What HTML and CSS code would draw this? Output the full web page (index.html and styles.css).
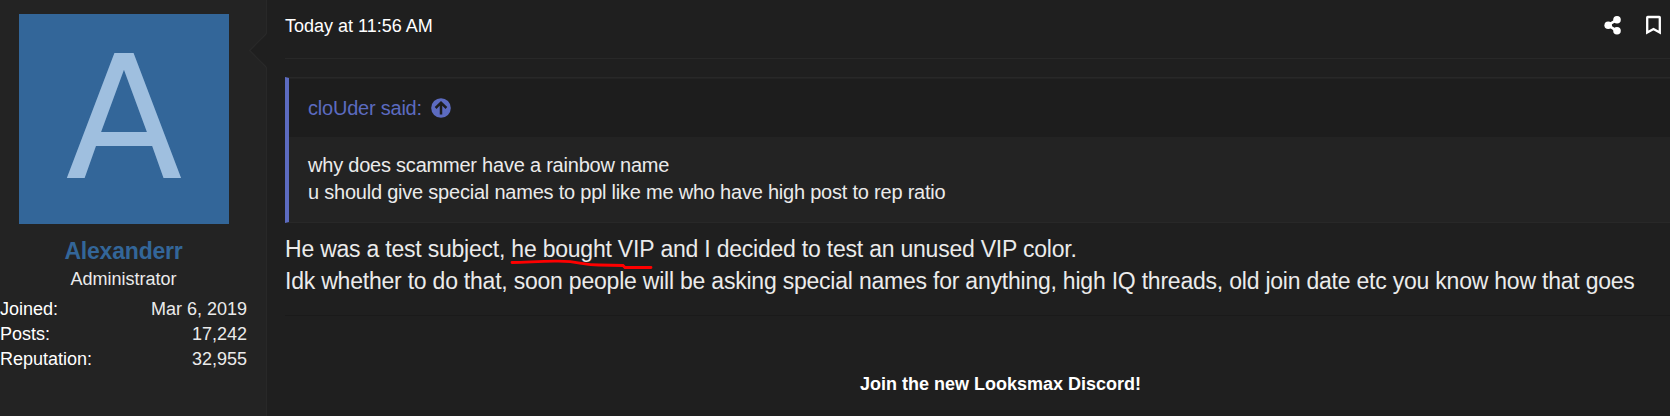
FILE: index.html
```html
<!DOCTYPE html>
<html lang="en">
<head>
  <meta charset="UTF-8" />
  <meta name="viewport" content="width=device-width, initial-scale=1.0" />
  <title>Thread</title>
  <link rel="stylesheet" href="styles.css">
</head>
<body>

  <article class="message">
    <aside class="message-user">
      <div class="avatar">A</div>
      <h4 class="username">Alexanderr</h4>
      <div class="user-title">Administrator</div>
      <dl class="user-stats">
        <div class="pair"><dt>Joined:</dt><dd>Mar 6, 2019</dd></div>
        <div class="pair"><dt>Posts:</dt><dd>17,242</dd></div>
        <div class="pair"><dt>Reputation:</dt><dd>32,955</dd></div>
      </dl>
      <svg class="arrow" width="18" height="36" viewBox="0 0 18 36">
        <path d="M17.5 1.5 L0.7 18.5 L17.5 35.5" fill="#1f1f1f" stroke="#292929" stroke-width="1.3" />
        <path d="M17.5 2.5 V34.5" stroke="#1f1f1f" />
      </svg>
    </aside>

    <div class="message-main">
      <header class="message-header">
        <time>Today at 11:56 AM</time>
        <div class="actions">
          <svg width="17" height="20" viewBox="0 0 17 20" fill="#fff">
            <path d="M4 10.2 L12.8 4.8 M4 10.2 L12.8 15.8" stroke="#fff" stroke-width="2.6" />
            <circle cx="4.2" cy="10.2" r="3.8" />
            <circle cx="13" cy="4.7" r="3.8" />
            <circle cx="13" cy="15.8" r="3.8" />
          </svg>
          <svg width="15" height="20" viewBox="0 0 15 20" fill="none" stroke="#fff" stroke-width="2.3">
            <path d="M1.2 17.6 V2.5 Q1.2 2 1.7 2 H13.3 Q13.8 2 13.8 2.5 V17.6 L7.5 14 Z" />
          </svg>
        </div>
      </header>

      <blockquote class="quote">
        <div class="quote-title">
          <span>cloUder said:</span>
          <svg width="20" height="20" viewBox="0 0 20 20">
            <circle cx="10" cy="10" r="9.8" fill="#5c6bc0" />
            <path d="M10 16.5 V5 M4.6 10 L10 4.7 L15.4 10" fill="none" stroke="#1d1d1d" stroke-width="2.5" />
          </svg>
        </div>
        <div class="quote-content">
          why does scammer have a rainbow name<br>
          u should give special names to ppl like me who have high post to rep ratio
        </div>
      </blockquote>

      <div class="message-body">
        He was a test subject, <span class="marked">he bought VIP<svg class="scribble" width="146" height="12" viewBox="0 0 146 12">
          <path d="M3 4.5 C18 4.5 30 3 48 3.2 C72 3 72 7 90 7 L114 7.5 L116 9.5 L142 9.5" />
        </svg></span> and I decided to test an unused VIP color.<br>
        Idk whether to do that, soon people will be asking special names for anything, high IQ threads, old join date etc you know how that goes
      </div>

      <footer class="signature">Join the new Looksmax Discord!</footer>
    </div>
  </article>

</body>
</html>
```
FILE: styles.css
```css
body {
  margin: 0;
  background: #1f1f1f;
  color: #ebebeb;
  font-family: "Liberation Sans", Arial, sans-serif;
  font-size: 18px;
  line-height: 25px;
  overflow: hidden;
}

.message {
  display: flex;
  height: 416px;
}

/* left column */
.message-user {
  position: relative;
  box-sizing: border-box;
  width: 267px;
  flex-shrink: 0;
  padding: 14px 19px 0 0;
  background: #232323;
  border-right: 1px solid #282828;
  text-align: center;
}

.avatar {
  width: 210px;
  height: 210px;
  margin-left: 19px;
  background: #336699;
  color: #9fbfdf;
  font-family: "DejaVu Sans", sans-serif;
  font-size: 171px;
  line-height: 209px;
}

.username {
  margin: 11px 0 0;
  color: #336699;
  font-size: 23px;
  line-height: 32px;
  letter-spacing: -0.2px;
}

.user-stats {
  margin: 5px 0 0;
}

.pair {
  display: flex;
  justify-content: space-between;
}

.pair dt {
  color: #fff;
}

.pair dd {
  margin: 0;
}

/* notch pointing at the user */
.arrow {
  position: absolute;
  top: 32px;
  right: -1px;
}

/* right column */
.message-main {
  flex: 1;
  min-width: 0;
  padding-left: 18px;
}

.message-header {
  display: flex;
  justify-content: space-between;
  box-sizing: border-box;
  height: 59px;
  padding: 14px 9px 0 0;
  border-bottom: 1px solid #282828;
  color: #fff;
}

.actions {
  display: flex;
  gap: 25px;
  padding-top: 1px;
}

.quote {
  margin: 18px 0 0;
  border: 1px solid #282828;
  border-left: 4px solid #5c6bc0;
  border-right: 0;
  background: #232323;
  font-size: 20px;
  letter-spacing: -0.22px;
}

.quote-title {
  display: flex;
  align-items: center;
  gap: 9px;
  height: 58px;
  margin-top: 1px;
  padding-left: 19px;
  background: #1d1d1d;
  color: #5c6bc0;
}

.quote-content {
  padding: 15px 19px 16px;
  line-height: 27px;
}

.message-body {
  box-sizing: border-box;
  height: 92px;
  padding-top: 10px;
  font-size: 23px;
  line-height: 32px;
  letter-spacing: -0.22px;
  white-space: nowrap;
}

.marked {
  position: relative;
}

/* hand-drawn underline */
.scribble {
  position: absolute;
  left: -2px;
  top: 22px;
  fill: none;
  stroke: #f00;
  stroke-width: 2.8;
  stroke-linecap: round;
}

.signature {
  padding: 56px 0 0 46px;
  border-top: 1px solid #1a1a1a;
  color: #fff;
  font-weight: bold;
  text-align: center;
}
```
